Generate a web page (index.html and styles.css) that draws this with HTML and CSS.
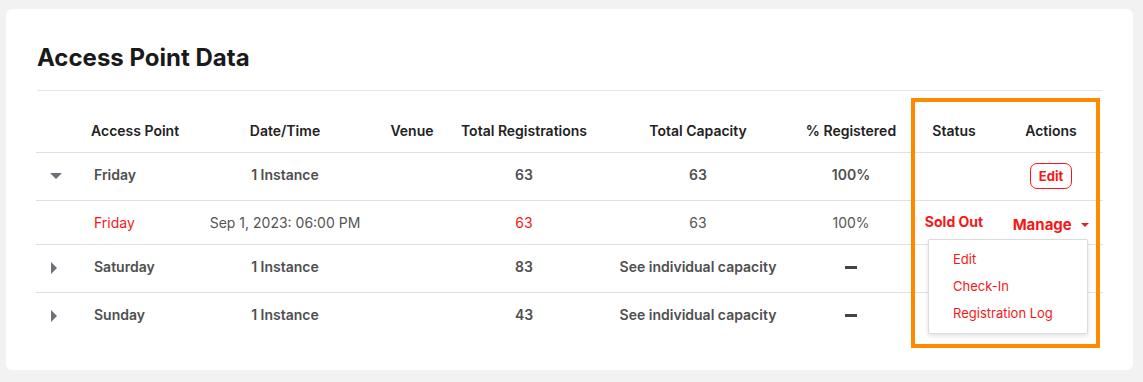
FILE: index.html
```html
<!DOCTYPE html>
<html>
<head>
    <title>Access Point Data</title>
    <meta charset="UTF-8">
    <link rel="stylesheet" href="styles.css">
</head>
<body>
    <div class="card">
        <h1>Access Point Data</h1>

        <div class="table-wrap">
            <table class="ap-table">
                <colgroup>
                    <col class="c-toggle">
                    <col class="c-point">
                    <col class="c-date">
                    <col class="c-venue">
                    <col class="c-regs">
                    <col class="c-cap">
                    <col class="c-pct">
                    <col class="c-status">
                    <col class="c-actions">
                </colgroup>
                <thead>
                    <tr>
                        <th></th>
                        <th class="left">Access Point</th>
                        <th>Date/Time</th>
                        <th>Venue</th>
                        <th>Total Registrations</th>
                        <th>Total Capacity</th>
                        <th>% Registered</th>
                        <th>Status</th>
                        <th class="actions">Actions</th>
                    </tr>
                </thead>
                <tbody>
                    <tr class="group">
                        <td><span class="caret-down"></span></td>
                        <td class="left">Friday</td>
                        <td>1 Instance</td>
                        <td></td>
                        <td>63</td>
                        <td>63</td>
                        <td>100%</td>
                        <td></td>
                        <td class="actions"><button class="btn-edit">Edit</button></td>
                    </tr>
                    <tr class="instance">
                        <td></td>
                        <td class="left red">Friday</td>
                        <td>Sep 1, 2023: 06:00 PM</td>
                        <td></td>
                        <td class="red">63</td>
                        <td>63</td>
                        <td>100%</td>
                        <td class="sold-out">Sold Out</td>
                        <td class="actions">
                            <div class="manage">
                                <span class="manage-label">Manage <span class="caret-red"></span></span>
                                <ul class="menu">
                                    <li>Edit</li>
                                    <li>Check-In</li>
                                    <li>Registration Log</li>
                                </ul>
                            </div>
                        </td>
                    </tr>
                    <tr class="group">
                        <td><span class="caret-right"></span></td>
                        <td class="left">Saturday</td>
                        <td>1 Instance</td>
                        <td></td>
                        <td>83</td>
                        <td>See individual capacity</td>
                        <td><span class="dash"></span></td>
                        <td></td>
                        <td></td>
                    </tr>
                    <tr class="group last">
                        <td><span class="caret-right"></span></td>
                        <td class="left">Sunday</td>
                        <td>1 Instance</td>
                        <td></td>
                        <td>43</td>
                        <td>See individual capacity</td>
                        <td><span class="dash"></span></td>
                        <td></td>
                        <td></td>
                    </tr>
                </tbody>
            </table>
            <div class="highlight"></div>
        </div>
    </div>
</body>
</html>
```

FILE: styles.css
```css
body {
    margin: 0;
    padding: 9px 10px 12px 6px;
    background: #f2f2f2;
    font-family: Inter, "Noto Sans", sans-serif;
}
.card {
    background: white;
    border-radius: 6px;
    padding: 35px 30px 30px 30px;
    height: 296px;
}
h1 {
    margin: 0 0 0 1px;
    font-size: 24px;
    font-weight: 700;
    color: #1a1a1a;
    line-height: 28px;
    padding-bottom: 18px;
    border-bottom: 1px solid #e3e6ea;
}
.table-wrap {
    position: relative;
}
.ap-table {
    width: 1067px;
    border-collapse: collapse;
    table-layout: fixed;
    font-size: 14px;
}
.c-toggle { width: 40px; }
.c-point { width: 124px; }
.c-date { width: 170px; }
.c-venue { width: 84px; }
.c-regs { width: 140px; }
.c-cap { width: 208px; }
.c-pct { width: 98px; }
.c-status { width: 108px; }
.c-actions { width: 95px; }
th, td {
    padding: 0;
    text-align: center;
    white-space: nowrap;
}
th {
    height: 44px;
    padding-top: 17px;
    font-weight: 600;
    color: #222;
    border-bottom: 1px solid #dde1e6;
}
th.left {
    text-align: left;
    padding-left: 15px;
}
td.left {
    text-align: left;
    padding-left: 18px;
}
.actions {
    padding-right: 9px;
}
.group td {
    height: 42px;
    padding-bottom: 5px;
    font-weight: 600;
    color: #4f4f4f;
    border-bottom: 1px solid #dde1e6;
}
.group.last td {
    border-bottom: none;
}
.instance td {
    height: 41px;
    line-height: 18px;
    color: #555;
    border-bottom: 1px solid #dde1e6;
}
.red {
    color: #f51818 !important;
}
.sold-out {
    color: #f51818 !important;
    font-weight: 700;
    padding-bottom: 2px;
}
.caret-down {
    display: inline-block;
    width: 0;
    height: 0;
    border-left: 6px solid transparent;
    border-right: 6px solid transparent;
    border-top: 6px solid #6b7079;
    vertical-align: middle;
}
.caret-right {
    display: inline-block;
    width: 0;
    height: 0;
    border-top: 6px solid transparent;
    border-bottom: 6px solid transparent;
    border-left: 6px solid #6b7079;
    margin-left: -5px;
    vertical-align: middle;
}
.btn-edit {
    font-family: Inter, "Noto Sans", sans-serif;
    font-size: 13px;
    font-weight: 700;
    color: #f51818;
    background: white;
    border: 1px solid #f51818;
    border-radius: 7px;
    padding: 0 8px;
    height: 26px;
    margin-top: 3px;
}
.manage {
    position: relative;
    line-height: 18px;
}
.manage-label {
    font-size: 15px;
    font-weight: 700;
    color: #f51818;
    position: relative;
    top: 2px;
}
.caret-red {
    display: inline-block;
    width: 0;
    height: 0;
    border-left: 4px solid transparent;
    border-right: 4px solid transparent;
    border-top: 4px solid #f51818;
    margin-left: 6px;
    vertical-align: middle;
}
.menu {
    position: absolute;
    top: 25px;
    right: 6px;
    width: 158px;
    margin: 0;
    padding: 6px 0 6px 0;
    list-style: none;
    background: white;
    border: 1px solid #dcdcdc;
    border-radius: 2px;
    box-shadow: 0 2px 5px rgba(0,0,0,0.12);
    text-align: left;
    z-index: 2;
}
.menu li {
    font-size: 13px;
    color: #f51818;
    padding-left: 24px;
    line-height: 27px;
}
.dash {
    display: inline-block;
    width: 12px;
    height: 3px;
    background: #444;
    vertical-align: middle;
}
.highlight {
    position: absolute;
    left: 875px;
    top: 7px;
    width: 181px;
    height: 242px;
    border: 4px solid #ff8a00;
    pointer-events: none;
}
```
